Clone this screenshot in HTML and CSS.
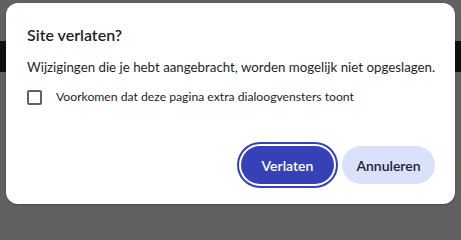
FILE: index.html
```html
<!DOCTYPE html>
<html lang="nl">
<head>
<meta charset="utf-8">
<title>Site verlaten?</title>
<link rel="stylesheet" href="styles.css">
</head>
<body>
<div class="page">
  <div class="page-top"></div>
  <div class="page-band"></div>
</div>
<div class="dialog" role="dialog" aria-labelledby="dlg-title">
  <h1 class="title" id="dlg-title">Site verlaten?</h1>
  <p class="message">Wijzigingen die je hebt aangebracht, worden mogelijk niet opgeslagen.</p>
  <label class="check-row">
    <span class="checkbox"></span>
    <span class="check-label">Voorkomen dat deze pagina extra dialoogvensters toont</span>
  </label>
  <div class="actions">
    <button class="btn btn-primary">Verlaten</button>
    <button class="btn btn-secondary">Annuleren</button>
  </div>
</div>
</body>
</html>
```
FILE: styles.css
```css
html, body {
  margin: 0;
  padding: 0;
}
body {
  width: 461px;
  height: 210px;
  overflow: hidden;
  background: #616161;
  font-family: "Lato", "Noto Sans", sans-serif;
  position: relative;
}
.page {
  height: 210px;
}
.page-top {
  height: 41px;
}
.page-band {
  height: 31px;
  background: #0f0f0f;
}
.dialog {
  position: absolute;
  left: 6px;
  top: 3px;
  width: 449px;
  height: 201px;
  box-sizing: border-box;
  background: #ffffff;
  border-radius: 12px;
  box-shadow: 0 1px 2px rgba(0,0,0,0.25);
  padding: 22px 20px 20px 21px;
  display: flex;
  flex-direction: column;
}
.title {
  margin: 0;
  font-size: 16px;
  font-weight: 600;
  line-height: 20px;
  color: #1f1f1f;
}
.message {
  margin: 13px 0 0;
  font-size: 13.3px;
  line-height: 18px;
  color: #1f1f1f;
  white-space: nowrap;
}
.check-row {
  margin-top: 13px;
  display: flex;
  align-items: center;
  gap: 14px;
}
.checkbox {
  width: 15px;
  height: 15px;
  box-sizing: border-box;
  border: 2px solid #616161;
  border-radius: 2px;
  flex: none;
}
.check-label {
  font-size: 12.2px;
  line-height: 16px;
  color: #1f1f1f;
}
.actions {
  margin-top: auto;
  display: flex;
  justify-content: flex-end;
  gap: 8px;
}
.btn {
  height: 38px;
  min-width: 93px;
  border: none;
  border-radius: 19px;
  padding: 0 12px;
  font-family: "Lato", "Noto Sans", sans-serif;
  font-size: 14px;
  font-weight: 600;
}
.btn-primary {
  background: #3641b8;
  color: #ffffff;
  outline: 2px solid #3641b8;
  outline-offset: 2px;
}
.btn-secondary {
  background: #d9e1fb;
  color: #1f1f2f;
}
```
